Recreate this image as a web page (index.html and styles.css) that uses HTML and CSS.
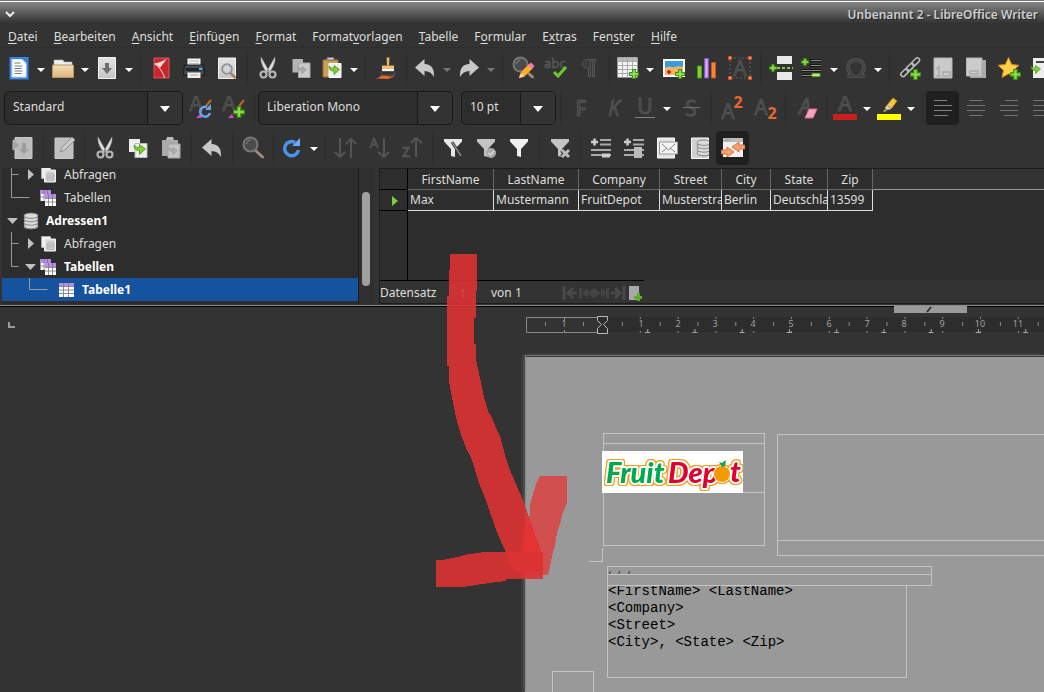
FILE: index.html
```
<!DOCTYPE html>
<html lang="de">
<head>
    <meta charset="UTF-8">
    <meta name="viewport" content="width=device-width, initial-scale=1.0">
    <title>Unbenannt 2 - LibreOffice Writer</title>
    <link rel="stylesheet" href="styles.css">
</head>
<body>
    <!-- shared icon parts -->
    <svg class="defs" width="0" height="0" aria-hidden="true">
        <defs>
            <linearGradient id="paper" x1="0" y1="0" x2="0" y2="1"><stop offset="0" stop-color="#e4e4e4"/><stop offset="1" stop-color="#c4c4c4"/></linearGradient>
            <linearGradient id="folder" x1="0" y1="0" x2="0" y2="1"><stop offset="0" stop-color="#f2dcb8"/><stop offset="1" stop-color="#dcb67c"/></linearGradient>
            <linearGradient id="purple" x1="0" y1="0" x2="1" y2="0"><stop offset="0" stop-color="#a56de2"/><stop offset=".5" stop-color="#d6b8f5"/><stop offset="1" stop-color="#a56de2"/></linearGradient>
        </defs>
        <symbol id="plus" viewBox="0 0 10 10"><path d="M3.500 .5h3v3h3v3h-3v3h-3v-3h-3v-3h3z" fill="#8be04a" stroke="#3f8a12"/></symbol>
        <symbol id="cut" viewBox="0 0 24 24">
            <path d="M5 1l8 14-2 1.500C7 12 4.500 6 5 1zM19 1l-8 14 2 1.500C17 12 19.500 6 19 1z" fill="#dcdcdc" stroke="#999" stroke-width=".5"/>
            <circle cx="7.500" cy="18.500" r="3" fill="none" stroke="#b4b4b4" stroke-width="2.200"/><circle cx="16.500" cy="18.500" r="3" fill="none" stroke="#b4b4b4" stroke-width="2.200"/>
        </symbol>
        <symbol id="swoop" viewBox="0 0 12 10"><path d="M1 1c0 4 2 5 5 5V9.500l5.500-5L6 .5V3C4 3.500 2.500 3 1 1z" stroke-width=".7"/></symbol>
        <symbol id="undo" viewBox="0 0 24 24"><path d="M2 11.500l9.500-8.500v5c7 0 10 5 9.500 13-2-4-5-6-9.500-6v5z" fill="#c8c8c8"/></symbol>
        <symbol id="lens" viewBox="0 0 24 24"><path d="M15 15l6.500 6" stroke="#a08a78" stroke-width="3" stroke-linecap="round"/><circle cx="9.500" cy="8.500" r="7" fill="#4b4b4e" stroke="#77777a" stroke-width="2"/><path d="M5.500 8c0-2 2-4 4-4" fill="none" stroke="#8a8a8c"/></symbol>
        <symbol id="funnel" viewBox="0 0 24 24"><path d="M3 3h18v2.500L14 13v8l-4-1v-7L3 5.500z"/></symbol>
        <symbol id="db" viewBox="0 0 18 18"><path d="M2 4v11c0 3 14 3 14 0V4z" fill="#aaa"/><g fill="#dadada" stroke="#777" stroke-width=".8"><ellipse cx="9" cy="14" rx="7" ry="2.700"/><ellipse cx="9" cy="10.500" rx="7" ry="2.700"/><ellipse cx="9" cy="7" rx="7" ry="2.700"/><ellipse cx="9" cy="3.700" rx="7" ry="2.700"/></g></symbol>
        <symbol id="queries" viewBox="0 0 18 18"><path d="M1.500 1.500h9v11h-9z" fill="#eee" stroke="#aaa"/><path d="M4.500 4h11v12h-11z" fill="#ddd" stroke="#f2f2f2"/><path d="M7 8.500c0-2 7-2 7 0v6H7zM7 10h7M7 12h7" fill="#ccc" stroke="#a4a4a4" stroke-width=".6"/></symbol>
        <symbol id="tables" viewBox="0 0 18 18">
            <path d="M.5 1h10v11H.5z" fill="#fff"/><path d="M.5 1h10v4H.5z" fill="#b98af0"/><path d="M4 1v11M7.500 1v11M.5 8h10" stroke="#777" fill="none" stroke-width=".8"/>
            <path d="M5 5h11v12H5z" fill="#fff"/><path d="M5 5h11v4H5z" fill="#b98af0"/><path d="M5 13h11M8.500 5v12M12.500 5v12M5 9.500h11" stroke="#777" fill="none" stroke-width=".8"/>
        </symbol>
        <symbol id="table" viewBox="0 0 18 18"><path d="M1 2h15v14H1z" fill="#fff"/><path d="M1 2h15v4H1z" fill="#b98af0"/><path d="M1 5.500h15M1 9h15M1 12.500h15M5.500 2v14M10.500 2v14" stroke="#888" fill="none"/></symbol>
    </svg>

    <header class="titlebar">
        <button class="window-menu" aria-label="Fenstermenü"><svg width="10" height="8"><path d="M1 1l4 4 4-4" fill="none" stroke="#eee" stroke-width="2"/></svg></button>
        <h1 class="title">Unbenannt 2 - LibreOffice Writer</h1>
    </header>

    <nav class="menubar">
        <button><u>D</u>atei</button>
        <button><u>B</u>earbeiten</button>
        <button><u>A</u>nsicht</button>
        <button><u>E</u>infügen</button>
        <button><u>F</u>ormat</button>
        <button>Format<u>v</u>orlagen</button>
        <button><u>T</u>abelle</button>
        <button>F<u>o</u>rmular</button>
        <button>E<u>x</u>tras</button>
        <button>Fen<u>s</u>ter</button>
        <button><u>H</u>ilfe</button>
    </nav>

    <div class="toolbar standard">
        <button class="tool split" aria-label="Neu"><svg class="icon" viewBox="0 0 24 24"><path d="M3.500 2h17v20.500h-17z" fill="#dbeafc" stroke="#3584e4" stroke-width="2"/><path d="M6 4h10l2.500 3v13H6z" fill="#fff"/><path d="M14 2h6v6z" fill="#3584e4"/><path d="M7.500 7h6M7.500 10h8M7.500 12.500h7M7.500 15h8M7.500 17.500h7" stroke="#777"/></svg></button><button class="drop" aria-label="Neu, Auswahl"></button>
        <button class="tool split" aria-label="Öffnen"><svg class="icon" viewBox="0 0 24 24"><path d="M3 4h9l1 2h8v6H3z" fill="#eee" stroke="#bbb" stroke-width=".6"/><path d="M1.500 9h21v12.500h-21z" fill="url(#folder)" stroke="#b8935e"/></svg></button><button class="drop" aria-label="Öffnen, Auswahl"></button>
        <button class="tool split" aria-label="Speichern"><svg class="icon" viewBox="0 0 24 24"><path d="M3.500 1.500h17v21h-17z" fill="url(#paper)" stroke="#f4f4f4"/><path d="M10 7h4v5h3l-5 6-5-6h3z" fill="#6c6e72"/></svg></button><button class="drop" aria-label="Speichern, Auswahl"></button>
        <span class="sep"></span>
        <button class="tool" aria-label="Als PDF exportieren"><svg class="icon" viewBox="0 0 24 24"><path d="M5 2h15v20H5z" fill="#c9252b" stroke="#e8686c" stroke-width=".8"/><path d="M5.500 7.500c6-1 10-3 13-5.500-5 5-6 14-2 20-2-6-6-12-11-14.500z" fill="#fff" opacity=".85"/><path d="M7 18c3-5 6-9 10-14 0 0-4 7-1 16-2-4-5-5-9-2z" fill="#c9252b"/><path d="M5.500 8c4 2 8 7 10 14" fill="none" stroke="#f6dcdc"/></svg></button>
        <button class="tool" aria-label="Drucken"><svg class="icon" viewBox="0 0 24 24"><path d="M5.500 2.500h13v7h-13z" fill="#f4f4f4"/><path d="M7 5h10M7 7.500h10" stroke="#bbb"/><path d="M2.500 9h19l1 10h-21z" fill="#484c50" stroke="#14171a"/><path d="M4 12h16v3H4z" fill="#202326"/><path d="M5.500 16.500h13v5.500h-13z" fill="#eee"/><path d="M8 19h8" stroke="#aaa"/><path d="M17 12h3v2h-3z" fill="#35c5f4"/></svg></button>
        <button class="tool" aria-label="Druckvorschau"><svg class="icon" viewBox="0 0 24 24"><path d="M3.500 2h17v20.500h-17z" fill="url(#paper)" stroke="#f4f4f4"/><path d="M15.500 17l5 5" stroke="#a8865a" stroke-width="2.500"/><circle cx="12" cy="13" r="5" fill="#c2c6ca" stroke="#8a8e92" stroke-width="1.500"/><circle cx="12" cy="13" r="2" fill="none" stroke="#eee"/></svg></button>
        <span class="sep"></span>
        <button class="tool" aria-label="Ausschneiden"><svg class="icon"><use href="#cut"/></svg></button>
        <button class="tool" aria-label="Kopieren"><svg class="icon" viewBox="0 0 24 24"><path d="M3.500 3h10.500v13.500H3.500z" fill="#b4b4b4"/><path d="M9.500 7h11.500v14.500H9.500z" fill="#cacaca" stroke="#a8a8a8"/><use href="#swoop" x="8" y="10" width="10" height="8" fill="#ababab" stroke="#8c8c8c"/></svg></button>
        <button class="tool split" aria-label="Einfügen"><svg class="icon" viewBox="0 0 24 24"><path d="M3 4h15v17H3z" fill="#cf9f55" stroke="#9b6f2c"/><path d="M6.500 4h8l-1-2.500h-6z" fill="#ccc" stroke="#777"/><path d="M9 7.500h12v14H9z" fill="#eee" stroke="#fff"/><use href="#swoop" x="8" y="9" width="12" height="10" fill="#7ed02f" stroke="#3f8a12"/></svg></button><button class="drop" aria-label="Einfügen, Auswahl"></button>
        <span class="sep"></span>
        <button class="tool" aria-label="Format übertragen"><svg class="icon" viewBox="0 0 24 24"><path d="M12.500 1.500h3l-.5 8h-2z" fill="#e8b860"/><path d="M8 9.500h12v4H8z" fill="#e9bd72"/><path d="M8 13h12v3H8z" fill="#f4f4f4"/><path d="M8 15.500h12l1 3.500H7z" fill="#333" stroke="#555"/><path d="M1 22.500c5 0 4-3 9-3s5 2 10 0c0 2-4 2-5 3.500z" fill="#e9692c"/></svg></button>
        <span class="sep"></span>
        <button class="tool split" aria-label="Rückgängig"><svg class="icon"><use href="#undo"/></svg></button><button class="drop dim" aria-label="Rückgängig, Auswahl"></button>
        <button class="tool split" aria-label="Wiederherstellen"><svg class="icon flip"><use href="#undo"/></svg></button><button class="drop dim" aria-label="Wiederherstellen, Auswahl"></button>
        <span class="sep"></span>
        <button class="tool" aria-label="Suchen und Ersetzen"><svg class="icon" viewBox="0 0 24 24"><use href="#lens"/><path d="M8 22l2-6 8-8 4 4-8 8z" fill="#f5b22e" stroke="#a86d10" stroke-width=".7"/><path d="M17 9l3-2.500 3.500 3.500L21 13z" fill="#f07ab0"/><path d="M8 22l2-5 3.500 3.500z" fill="#eed8b0"/></svg></button>
        <button class="tool" aria-label="Rechtschreibung"><svg class="icon" viewBox="0 0 24 24"><text x="0" y="12" class="glyph abc">abc</text><path d="M10 16l4 4 8-9" fill="none" stroke="#6cc72c" stroke-width="3"/></svg></button>
        <button class="tool" aria-label="Formatierungszeichen"><svg class="icon" viewBox="0 0 24 24"><path d="M19 3.500h-9c-6 0-6 8.500 0 8.500h1.500v9h2V5h2v16h2V5H19z" fill="#3c3c3c" stroke="#5c5c5c" stroke-width=".8"/></svg></button>
        <span class="sep"></span>
        <button class="tool split" aria-label="Tabelle einfügen"><svg class="icon" viewBox="0 0 24 24"><path d="M1.500 1.500h20v20h-20z" fill="#f4f4f4"/><path d="M1.500 1.500h20v4h-20z" fill="#bbb"/><path d="M1.500 5.500h20M1.500 9.500h20M1.500 13.500h20M1.500 17.500h20M6.500 1.500v20M11.500 1.500v20M16.500 1.500v20" stroke="#aaa"/><use href="#plus" x="13" y="13" width="10" height="10"/></svg></button><button class="drop" aria-label="Tabelle, Auswahl"></button>
        <button class="tool" aria-label="Bild einfügen"><svg class="icon" viewBox="0 0 24 24"><path d="M1 3h22v18H1z" fill="#fff"/><path d="M3 5h18v7H3z" fill="#3b9bdc"/><path d="M3 12c5-3 7 0 10-1s5-1 8 0v8H3z" fill="#f4b563"/><path d="M7 14v4M5 16h4" stroke="#d02818" stroke-width="2"/><use href="#plus" x="13" y="13" width="10" height="10"/></svg></button>
        <button class="tool" aria-label="Diagramm einfügen"><svg class="icon" viewBox="0 0 24 24"><path d="M2.500 10h4v12h-4z" fill="#7ed02f" stroke="#4a9a18"/><path d="M9.500 2.500h4v19.500h-4z" fill="url(#purple)" stroke="#8a4fd0"/><path d="M16.500 6.500h4v15.500h-4z" fill="#f08838" stroke="#c85a14"/></svg></button>
        <button class="tool" aria-label="Textfeld einfügen"><svg class="icon" viewBox="0 0 24 24"><path d="M2 2h20v20H2z" fill="none" stroke="#606060" stroke-dasharray="2 2"/><text x="12" y="20" text-anchor="middle" class="glyph">A</text><path d="M.5 .5h3v3h-3zM20.500 .5h3v3h-3zM.5 20.500h3v3h-3zM20.500 20.500h3v3h-3z" fill="#f49a70" stroke="#d84a1c"/></svg></button>
        <span class="sep"></span>
        <button class="tool" aria-label="Seitenumbruch"><svg class="icon" viewBox="0 0 24 24"><path d="M8 0h15v8H8zM8 16h15v8H8z" fill="#e8e8e8"/><path d="M8 12h16" stroke="#7ed02f" stroke-width="2" stroke-dasharray="3 2"/><use href="#plus" x="0" y="8" width="8" height="8"/></svg></button>
        <button class="tool split" aria-label="Feldbefehl"><svg class="icon" viewBox="0 0 24 24"><path d="M10 4.500h11M10 9.500h11M2 14.500h19M2 19.500h10" stroke="#161616" stroke-width="3"/><path d="M11 4.500h10M11 9.500h10M2 14.500h19M2 19.500h10" stroke="#8a8a8a"/><use href="#plus" x="1" y="2" width="8" height="8"/><path d="M12 17.500h8v3h-8z" fill="#b8ec80" stroke="#5aaa22"/></svg></button><button class="drop" aria-label="Feldbefehl, Auswahl"></button>
        <button class="tool split" aria-label="Sonderzeichen"><svg class="icon" viewBox="0 0 24 24"><path d="M3 20h6c-8-6-6-16 3-16s11 10 3 16h6" fill="none" stroke="#5a5a5a" stroke-width="3.500"/><path d="M3 20h6c-8-6-6-16 3-16s11 10 3 16h6" fill="none" stroke="#404040" stroke-width="2"/></svg></button><button class="drop" aria-label="Sonderzeichen, Auswahl"></button>
        <span class="sep"></span>
        <button class="tool" aria-label="Hyperlink"><svg class="icon" viewBox="0 0 24 24"><g fill="none" stroke="#bebebe" stroke-width="1.500"><rect x="15.500" y="1" width="4.500" height="9" rx="2.200" transform="rotate(45 17.500 5.500)"/><rect x="10" y="6.500" width="4.500" height="9" rx="2.200" transform="rotate(45 12 11)"/><rect x="4.500" y="12" width="4.500" height="9" rx="2.200" transform="rotate(45 6.500 16.500)"/></g><use href="#plus" x="12" y="13" width="11" height="11"/></svg></button>
        <button class="tool" aria-label="Fußnote"><svg class="icon" viewBox="0 0 24 24"><path d="M3 2h18v20H3z" fill="#cacaca" stroke="#b4b4b4"/><path d="M5 13l3-2v9M5 20h5M12 16h7v4h-7z" fill="none" stroke="#aaa" stroke-width="1.500"/></svg></button>
        <button class="tool" aria-label="Endnote"><svg class="icon" viewBox="0 0 24 24"><path d="M6 4h16v18H6z" fill="#aaa"/><path d="M2.500 2h15.500v18H2.500z" fill="#ccc" stroke="#b4b4b4"/><path d="M6 15h8v3H6zM18 12v7M18 8v2" fill="none" stroke="#aaa" stroke-width="1.500"/></svg></button>
        <button class="tool" aria-label="Lesezeichen"><svg class="icon" viewBox="0 0 24 24"><path d="M11.500 1.500l3.200 7 7.300.8-5.500 5 1.600 7.200-6.600-3.700L5 21.500l1.500-7.200-5.500-5 7.300-.8z" fill="#fbd04c" stroke="#d28a12"/><use href="#plus" x="13" y="13" width="11" height="11"/></svg></button>
        <button class="tool" aria-label="Querverweis"><svg class="icon" viewBox="0 0 24 24"><path d="M3 2h18v20H3z" fill="#eee"/><path d="M6 6h14" stroke="#444" stroke-width="2"/><use href="#swoop" x="0" y="9" width="11" height="9" fill="#7ed02f" stroke="#3f8a12"/></svg></button>
    </div>

    <div class="toolbar formatting">
        <span class="combo style-name"><select aria-label="Absatzvorlage"><option>Standard</option></select></span>
        <button class="tool" aria-label="Vorlage aktualisieren"><svg class="icon" viewBox="0 0 24 24"><text x="7" y="15" text-anchor="middle" class="glyph">A</text><path d="M17 10l5-6" stroke="#c06820" stroke-width="2"/><path d="M7 22l4-4 2 4z" fill="#d04ac8"/><path d="M18 11a5 5 0 1 0 3 6" fill="none" stroke="#6aa6ee" stroke-width="2.500"/><path d="M16 14h6V8z" fill="#6aa6ee"/></svg></button>
        <button class="tool" aria-label="Neue Vorlage"><svg class="icon" viewBox="0 0 24 24"><text x="7" y="15" text-anchor="middle" class="glyph">A</text><path d="M17 10l5-6" stroke="#c06820" stroke-width="2"/><path d="M6 22l4-4 2 4z" fill="#d04ac8"/><use href="#plus" x="11" y="10" width="12" height="12"/></svg></button>
        <span class="sep"></span>
        <span class="combo font-name"><select aria-label="Schriftname"><option>Liberation Mono</option></select></span>
        <span class="combo font-size"><select aria-label="Schriftgröße"><option>10 pt</option></select></span>
        <span class="sep"></span>
        <button class="tool" aria-label="Fett"><svg class="icon" viewBox="0 0 24 24"><text x="12" y="20" text-anchor="middle" class="glyph bold">F</text></svg></button>
        <button class="tool" aria-label="Kursiv"><svg class="icon" viewBox="0 0 24 24"><text x="12" y="20" text-anchor="middle" class="glyph italic">K</text></svg></button>
        <button class="tool split" aria-label="Unterstrichen"><svg class="icon" viewBox="0 0 24 24"><text x="12" y="18" text-anchor="middle" class="glyph">U</text><path d="M2 21.500h20" stroke="#808080"/></svg></button><button class="drop" aria-label="Unterstrichen, Auswahl"></button>
        <button class="tool" aria-label="Durchgestrichen"><svg class="icon" viewBox="0 0 24 24"><text x="12" y="20" text-anchor="middle" class="glyph">S</text><path d="M4 11.500h17" stroke="#707070"/></svg></button>
        <span class="sep"></span>
        <button class="tool" aria-label="Hochgestellt"><svg class="icon" viewBox="0 0 24 24"><text x="8" y="23" text-anchor="middle" class="glyph">A</text><text x="18" y="12" text-anchor="middle" class="digit">2</text></svg></button>
        <button class="tool" aria-label="Tiefgestellt"><svg class="icon" viewBox="0 0 24 24"><text x="8" y="19" text-anchor="middle" class="glyph">A</text><text x="19" y="23" text-anchor="middle" class="digit">2</text></svg></button>
        <span class="sep"></span>
        <button class="tool" aria-label="Formatierung löschen"><svg class="icon" viewBox="0 0 24 24"><text x="11" y="18" text-anchor="middle" class="glyph italic">A</text><path d="M15 13h8l-4 9h-8z" fill="#f6a3bd" stroke="#e8608a"/></svg></button>
        <span class="sep"></span>
        <button class="tool split" aria-label="Schriftfarbe"><svg class="icon" viewBox="0 0 24 24"><text x="12" y="15" text-anchor="middle" class="glyph">A</text><path d="M0 18h24v6H0z" fill="#c9211e"/></svg></button><button class="drop" aria-label="Schriftfarbe, Auswahl"></button>
        <button class="tool split" aria-label="Hervorheben"><svg class="icon" viewBox="0 0 24 24"><path d="M10 9l6-7 4 3-6 8z" fill="#f6c846" stroke="#b8860b"/><path d="M10 9l4 4-4 1-2-2z" fill="#ddd" stroke="#888"/><path d="M8 13l2 2-4 1z" fill="#e8b030"/><path d="M0 18h24v6H0z" fill="#ffff00"/></svg></button><button class="drop" aria-label="Hervorheben, Auswahl"></button>
        <span class="sep"></span>
        <button class="tool active" aria-label="Linksbündig"><svg class="icon" viewBox="0 0 24 24"><path d="M3 4.500h13M3 9.500h18M3 14.500h18M3 19.500h14" stroke="#808080"/></svg></button>
        <button class="tool" aria-label="Zentriert"><svg class="icon lines" viewBox="0 0 24 24"><path d="M5 4.500h14M3 9.500h18M3 14.500h18M5 19.500h14"/></svg></button>
        <button class="tool" aria-label="Rechtsbündig"><svg class="icon lines" viewBox="0 0 24 24"><path d="M8 4.500h13M3 9.500h18M3 14.500h18M7 19.500h14"/></svg></button>
        <button class="tool" aria-label="Blocksatz"><svg class="icon lines" viewBox="0 0 24 24"><path d="M3 4.500h18M3 9.500h18M3 14.500h18M3 19.500h18"/></svg></button>
    </div>

    <div class="toolbar table-data">
        <button class="tool" aria-label="Datensatz speichern"><svg class="icon" viewBox="0 0 24 24"><path d="M4 1.500h17v21H4z" fill="#bcbcbc" stroke="#c8c8c8"/><path d="M2 4l7 5-7 5z" fill="#a4a4a4" stroke="#bbb"/><path d="M11 7h4v6h3l-5 5-5-5h3z" fill="#9c9c9c"/></svg></button>
        <span class="sep"></span>
        <button class="tool" aria-label="Daten bearbeiten"><svg class="icon" viewBox="0 0 24 24"><path d="M3 2h18v20.500H3z" fill="#c0c0c0" stroke="#c8c8c8"/><path d="M8 16l2-5L20 1l3 3-10 10z" fill="#c8c8c8" stroke="#929292"/></svg></button>
        <span class="sep"></span>
        <button class="tool" aria-label="Ausschneiden"><svg class="icon"><use href="#cut"/></svg></button>
        <button class="tool" aria-label="Kopieren"><svg class="icon" viewBox="0 0 24 24"><path d="M3 3h11v13H3z" fill="#eee"/><path d="M9 7.500h12v14H9z" fill="#eee" stroke="#bbb"/><use href="#swoop" x="7" y="8" width="13" height="11" fill="#7ed02f" stroke="#3f8a12"/></svg></button>
        <button class="tool" aria-label="Einfügen"><svg class="icon" viewBox="0 0 24 24"><path d="M3 4h16v16H3z" fill="#aaa"/><path d="M7 4h8l-1-3H8z" fill="#bbb"/><path d="M9 8h12v14H9z" fill="#c4c4c4" stroke="#a4a4a4"/><use href="#swoop" x="9" y="11" width="10" height="8" fill="#b0b0b0" stroke="#909090"/></svg></button>
        <span class="sep"></span>
        <button class="tool" aria-label="Rückgängig"><svg class="icon"><use href="#undo"/></svg></button>
        <span class="sep"></span>
        <button class="tool" aria-label="Datensatz suchen"><svg class="icon"><use href="#lens"/></svg></button>
        <span class="sep"></span>
        <button class="tool split" aria-label="Aktualisieren"><svg class="icon" viewBox="0 0 24 24"><path d="M15 6.500a7 7 0 1 0 3.500 7.500" fill="none" stroke="#4a94ee" stroke-width="3.500"/><path d="M12 10h8V2z" fill="#6aaaf4"/></svg></button><button class="drop" aria-label="Aktualisieren, Auswahl"></button>
        <span class="sep"></span>
        <button class="tool" aria-label="Sortieren"><svg class="icon" viewBox="0 0 24 24"><path d="M6 2v19M1 16l5 5 5-5M17 22V3M12 8l5-5 5 5" class="line"/></svg></button>
        <button class="tool" aria-label="Aufsteigend"><svg class="icon" viewBox="0 0 24 24"><text x="7" y="12" text-anchor="middle" class="glyph small">A</text><path d="M17 2v19M11 16l6 5 5-5" class="line"/></svg></button>
        <button class="tool" aria-label="Absteigend"><svg class="icon" viewBox="0 0 24 24"><text x="6" y="21" text-anchor="middle" class="glyph small">Z</text><path d="M16 21V2M11 7l5-5 6 5" class="line"/></svg></button>
        <span class="sep"></span>
        <button class="tool" aria-label="AutoFilter"><svg class="icon" viewBox="0 0 24 24"><use href="#funnel" fill="#e8e8e8"/><path d="M11 6l9 14" stroke="#444" stroke-width="3"/><path d="M11 6l9 14" stroke="#aaa"/></svg></button>
        <button class="tool" aria-label="Filter anwenden"><svg class="icon" viewBox="0 0 24 24"><use href="#funnel" fill="#c4c4c4"/><circle cx="17" cy="17" r="5" fill="#aaa"/><path d="M14.500 17l2 2 3.500-4" fill="none" stroke="#ddd" stroke-width="1.500"/></svg></button>
        <button class="tool" aria-label="Standardfilter"><svg class="icon"><use href="#funnel" fill="#f0f0f0"/></svg></button>
        <span class="sep"></span>
        <button class="tool" aria-label="Filter entfernen"><svg class="icon" viewBox="0 0 24 24"><use href="#funnel" fill="#c4c4c4"/><path d="M14 14l7 7M21 14l-7 7" stroke="#333" stroke-width="5"/><path d="M14 14l7 7M21 14l-7 7" stroke="#bbb" stroke-width="3"/></svg></button>
        <span class="sep"></span>
        <button class="tool" aria-label="Daten in Text"><svg class="icon" viewBox="0 0 24 24"><path d="M11 4h11M11 8.500h11M2 14h20M2 19h20" stroke="#aaa" stroke-width="2"/><path d="M5.500 2.500v7M2 6h7" stroke="#ccc" stroke-width="2.500"/><path d="M13 17.500h8v4h-8z" fill="#ccc"/></svg></button>
        <button class="tool" aria-label="Daten in Felder"><svg class="icon" viewBox="0 0 24 24"><path d="M11 4h11M11 8.500h11M2 14h20M2 19h20" stroke="#aaa" stroke-width="2"/><path d="M5.500 2.500v7M2 6h7" stroke="#ccc" stroke-width="2.500"/><path d="M12 11h8v11h-8z" fill="#bbb"/></svg></button>
        <button class="tool" aria-label="Seriendruck"><svg class="icon" viewBox="0 0 24 24"><path d="M2.500 2h17v20h-17z" fill="#e4e4e4" stroke="#fff"/><path d="M4.500 6h18v12h-18z" fill="#f4f4f4" stroke="#999"/><path d="M7 8l6.500 6L20 8M7 16l5-4M20 16l-5-4" fill="none" stroke="#888"/></svg></button>
        <button class="tool" aria-label="Datenquelle"><svg class="icon" viewBox="0 0 24 24"><path d="M3.500 2h17v20.500h-17z" fill="#d0d0d0" stroke="#fff"/><svg x="7" y="3" width="14" height="19"><use href="#db" width="18" height="18"/></svg></svg></button>
        <button class="tool active" aria-label="Explorer ein/aus"><svg class="icon" viewBox="0 0 24 24"><path d="M2 2h20v19H2z" fill="#f0f0f0"/><path d="M2 2h20v4H2z" fill="#bbb"/><path d="M4 4h6" stroke="#777" stroke-dasharray="1 1"/><path d="M24 9h-6V6l-7 5 7 5v-3h6zM0 14h6v-3l7 5-7 5v-3H0z" fill="#f6a070" stroke="#d2602a" stroke-width=".8"/></svg></button>
    </div>

    <section class="sources">
        <div class="explorer">
            <ul class="tree">
                <li class="row"><svg class="guide level1"><path d="M9.500 0v23M9.500 11.500h7"/><path class="closed" d="M26 6v11l6-5.500z"/></svg><svg class="node"><use href="#queries"/></svg>Abfragen</li>
                <li class="row"><svg class="guide level1"><path d="M9.500 0v11.500h18"/></svg><svg class="node"><use href="#tables"/></svg>Tabellen</li>
                <li class="row bold"><svg class="guide"><path class="open" d="M5 9h11l-5.500 6z"/></svg><svg class="node"><use href="#db"/></svg>Adressen1</li>
                <li class="row"><svg class="guide level1"><path d="M9.500 0v23M9.500 11.500h7"/><path class="closed" d="M26 6v11l6-5.500z"/></svg><svg class="node"><use href="#queries"/></svg>Abfragen</li>
                <li class="row bold"><svg class="guide level1"><path d="M9.500 0v11.500h7"/><path class="open" d="M23 9h11l-5.500 6z"/></svg><svg class="node"><use href="#tables"/></svg>Tabellen</li>
                <li class="row bold selected"><svg class="guide level2"><path d="M27.500 0v11.500h18"/></svg><svg class="node"><use href="#table"/></svg>Tabelle1</li>
            </ul>
            <div class="scrollbar"><div class="thumb"></div></div>
        </div>
        <div class="browser">
            <div class="grid">
                <table>
                    <colgroup><col class="c-handle"><col class="c-first"><col class="c-last"><col class="c-company"><col class="c-street"><col class="c-city"><col class="c-state"><col class="c-zip"><col></colgroup>
                    <thead>
                        <tr><th class="handle"></th><th>FirstName</th><th>LastName</th><th>Company</th><th>Street</th><th>City</th><th>State</th><th>Zip</th><th class="filler"></th></tr>
                    </thead>
                    <tbody>
                        <tr><td class="handle"><svg width="8" height="10"><path d="M1 0v10l6-5z" fill="#7ccf35"/></svg></td><td>Max</td><td>Mustermann</td><td>FruitDepot</td><td>Musterstraße</td><td>Berlin</td><td>Deutschland</td><td>13599</td><td class="filler"></td></tr>
                    </tbody>
                </table>
                <div class="handle-strip"></div>
            </div>
            <div class="records">
                <label for="record">Datensatz</label>
                <input type="text" id="record" value="1">
                <span class="count">von 1</span>
                <button aria-label="Erster Datensatz"><svg width="16" height="16"><path d="M2 1v14M15 8H6M11 3L6 8l5 5"/></svg></button>
                <button aria-label="Vorheriger Datensatz"><svg width="16" height="16"><path class="solid" d="M1 3h3v10H1zM10 3v10L3 8zM16 3v10L9 8z"/></svg></button>
                <button aria-label="Nächster Datensatz"><svg width="16" height="16"><path class="solid" d="M15 3h-3v10h3zM7 3v10l6-5zM0 3v10l7-5z"/></svg></button>
                <button aria-label="Letzter Datensatz"><svg width="16" height="16"><path d="M14 1v14M1 8h9M5 3l5 5-5 5"/></svg></button>
                <button aria-label="Neuer Datensatz"><svg width="16" height="16"><rect x="3" y="1" width="10" height="14" fill="#a8a8a8"/><svg x="8" y="8" width="8" height="8" viewBox="0 0 8 8"><rect x="3" width="3" height="8" fill="#5cab2c"/><rect y="3" width="8" height="3" fill="#5cab2c"/></svg></svg></button>
            </div>
        </div>
    </section>

    <main class="workspace">
        <div class="splitter"><svg width="73" height="7"><path d="M33 6l4-5" stroke="#222" stroke-width="1.500"/></svg></div>
        <div class="ruler-row">
            <svg class="tab-mark" width="8" height="6"><path d="M1 0v5h6" fill="none" stroke="#999" stroke-width="2"/></svg>
            <svg class="ruler" width="100%" height="18">
                <defs>
                    <pattern id="ticks" x="77" y="0" width="37.800" height="18" patternUnits="userSpaceOnUse"><path d="M19.400 6v4M37.300 1v2M37.300 15v2" stroke="#8a8a8a"/></pattern>
                    <pattern id="tabs" x="77" y="0" width="47.250" height="18" patternUnits="userSpaceOnUse"><path d="M44.700 13v3M42 16.500h5" stroke="#aaa" fill="none"/></pattern>
                </defs>
                <rect x="77" y="1" width="100%" height="15" fill="#2d2d2d"/>
                <rect x="77" y="0" width="100%" height="18" fill="url(#ticks)"/>
                <rect x="77" y="0" width="100%" height="18" fill="url(#tabs)"/>
                <path d="M.5 1.500h76v15H.500zM19.500 6v4M57.500 6v4M38.500 2v2M38.500 14v2" fill="none" stroke="#8a8a8a"/>
                <path d="M71.500 .5h10v4l-4 4 4 4v5h-10v-5l4-4-4-4z" fill="#2d2d2d" stroke="#bbb"/>
                <g class="numbers">
                    <text x="38" y="11">1</text><text x="115" y="11">1</text><text x="152" y="11">2</text><text x="189" y="11">3</text><text x="227" y="11">4</text><text x="265" y="11">5</text><text x="303" y="11">6</text><text x="341" y="11">7</text><text x="378" y="11">8</text><text x="416" y="11">9</text><text x="454" y="11">10</text><text x="492" y="11">11</text>
                </g>
            </svg>
        </div>
        <div class="paper">
            <div class="frame logo-frame">
                <div class="frame-head"></div>
                <div class="frame-line"></div>
            </div>
            <svg class="logo" viewBox="0 0 141 42" width="141" height="42">
                <rect width="141" height="42" fill="#fff"/>
                <g class="wordmark">
                    <text x="4" y="32">Fruit</text>
                    <text x="66" y="32" class="red">Dep</text>
                    <text x="128" y="31" class="red">t</text>
                    <circle cx="120" cy="23" r="8" fill="#f29a00" stroke-width="2"/>
                </g>
                <path d="M120 16l-3-5 3 1 4-3-1 6z" fill="#00a94f"/>
            </svg>
            <div class="frame side-frame"><div class="side-body"></div></div>
            <div class="corner"></div>
            <div class="frame sender-frame"><span class="sender">, , ,</span></div>
            <div class="frame address-frame">&lt;FirstName&gt; &lt;LastName&gt;<br>&lt;Company&gt;<br>&lt;Street&gt;<br>&lt;City&gt;, &lt;State&gt; &lt;Zip&gt;</div>
            <div class="frame mark-frame"></div>
        </div>
    </main>

    <!-- drag direction marker, lies over the whole window -->
    <svg class="marker" width="140" height="340" viewBox="432 250 140 340" shape-rendering="crispEdges" aria-hidden="true">
        <path class="shaft" d="M450 254H477V291H476V318H474V344H476V360L480 378 484 397 488 411 492 418 496 428 500 436 505 455 510 470 515 482 520 493 525 505 528 515 533 528 536 537 539 545 541 552V571H515L511 566 506 552 502 544 497 532 492 518 487 503 483 493 478 480 472 460 466 448 460 432 456 417 452 398 449 381V366H447V296H449V270H450z"/>
        <path class="barb" d="M540 476H567V503L563 512 561 520 557 533 555 545 552 556 550 567 548 575H521V550L525 530 530 515V505L533 494 536 484z"/>
        <path class="shaft" d="M436 560H442L463 556V555L484 552H543V579H506V581L489 583 463 587H436z"/>
    </svg>
</body>
</html>
```
FILE: styles.css
```
* {
    box-sizing: border-box;
}
body {
    margin: 0;
    height: 100vh;
    display: flex;
    flex-direction: column;
    overflow: hidden;
    position: relative;
    background: #333;
    color: #dededc;
    font-family: "Noto Sans", sans-serif;
    font-size: 12px;
    line-height: 16px;
}
button, input, select {
    font: inherit;
    color: inherit;
    background: none;
    border: none;
    margin: 0;
    padding: 0;
}
.defs {
    position: absolute;
}

/* title and menu */
.titlebar {
    height: 25px;
    flex: none;
    display: flex;
    align-items: center;
    justify-content: space-between;
    padding: 4px 6px 0 5px;
    border-top: 1px solid #777;
    background: linear-gradient(#fff 0, #fff 1px, #858585 1px, #333 22px);
}
.window-menu {
    display: flex;
}
.title {
    margin: 0;
    font-size: 12px;
    font-weight: 600;
    color: #ccc;
    text-shadow: 1px 1px 0 #222, -1px -1px 0 #666;
}
.menubar {
    height: 23px;
    flex: none;
    display: flex;
    align-items: center;
    padding-top: 2px;
    border-bottom: 1px solid #2e2e2e;
}
.menubar button {
    padding: 0 8px;
}
.menubar u {
    text-underline-offset: 2px;
}

/* toolbars */
.toolbar {
    flex: none;
    display: flex;
    align-items: center;
    overflow: hidden;
    height: 40px;
    padding-left: 4px;
}
.toolbar > * {
    flex: none;
}
.tool {
    width: 33px;
    height: 34px;
    display: flex;
    align-items: center;
    justify-content: center;
    border-radius: 4px;
}
.tool.split {
    width: 30px;
}
.tool.active {
    background: #1f1f1f;
}
.icon {
    width: 24px;
    height: 24px;
}
.icon.flip {
    transform: scaleX(-1);
}
.drop {
    width: 14px;
    height: 34px;
    display: flex;
    align-items: center;
    justify-content: center;
}
.drop::before {
    content: "";
    border: 4px solid transparent;
    border-top-color: #fff;
    border-bottom: none;
    margin-top: 3px;
}
.drop.dim::before {
    border-top-color: #777;
}
.sep {
    width: 8px;
    height: 32px;
    background: linear-gradient(#2c2c2c, #2c2c2c) center / 1px 100% no-repeat;
}
.formatting {
    height: 39px;
}
.table-data {
    height: 41px;
    padding-left: 6px;
}
.glyph {
    font-size: 21px;
    fill: #474747;
    stroke: #606060;
    stroke-width: .5px;
}
.glyph.abc {
    font-size: 13px;
}
.glyph.small {
    font-size: 14px;
}
.glyph.bold {
    font-weight: 600;
}
.glyph.italic {
    font-style: italic;
}
.digit {
    font-size: 16px;
    font-weight: bold;
    fill: #e8682c;
}
.line {
    fill: none;
    stroke: #545454;
    stroke-width: 2px;
}
.lines {
    stroke: #747474;
}
.combo {
    position: relative;
    height: 34px;
    border: 1px solid #191919;
    border-radius: 5px;
    background: #2d2d2d;
    overflow: hidden;
}
.combo select {
    appearance: none;
    display: block;
    width: 100%;
    height: 31px;
    padding: 0 40px 0 8px;
}
.combo::before {
    content: "";
    position: absolute;
    right: 0;
    top: 0;
    width: 34px;
    height: 32px;
    border-left: 1px solid #191919;
    background: #333;
    pointer-events: none;
}
.combo::after {
    content: "";
    position: absolute;
    right: 12px;
    top: 14px;
    border: 5px solid transparent;
    border-top: 6px solid #fff;
    border-bottom: none;
    pointer-events: none;
}
.style-name {
    width: 179px;
    margin-right: 1px;
}
.font-name {
    width: 195px;
    margin-right: 8px;
}
.font-size {
    width: 95px;
}

/* data sources */
.sources {
    flex: none;
    height: 136px;
    display: flex;
}
.explorer {
    width: 379px;
    flex: none;
    display: flex;
    padding-left: 2px;
}
.tree {
    flex: none;
    width: 356px;
    margin: 0;
    padding: 0;
    list-style: none;
    overflow: hidden;
    display: flex;
    flex-direction: column;
    background: #2d2d2d;
}
.row {
    height: 23px;
    flex: none;
    display: flex;
    align-items: center;
}
.row:first-child {
    margin-top: -5px;
}
.row.bold {
    font-weight: bold;
    color: #fff;
}
.row.selected {
    background: #15539e;
}
.guide {
    width: 20px;
    height: 23px;
    fill: none;
    stroke: #999;
}
.guide.level1 {
    width: 38px;
}
.guide.level2 {
    width: 56px;
}
.guide .open, .guide .closed {
    fill: #c0c0c0;
    stroke: none;
}
.node {
    width: 18px;
    height: 18px;
    margin-right: 6px;
}
.scrollbar {
    width: 16px;
    border-left: 1px solid #1c1c1c;
    background: #303030;
    padding: 24px 3px 18px;
    display: flex;
}
.thumb {
    width: 8px;
    border-radius: 4px;
    background: #a0a0a0;
}
.browser {
    flex: 1;
    min-width: 0;
    display: flex;
    flex-direction: column;
    border: 1px solid #1c1c1c;
    border-right: none;
}
.grid {
    flex: 1;
    display: flex;
    flex-direction: column;
    background: #2d2d2d;
}
.grid table {
    width: 100%;
    table-layout: fixed;
    border-collapse: separate;
    border-spacing: 0;
}
.grid th, .grid td {
    height: 21px;
    padding: 0 2px;
    overflow: hidden;
    white-space: nowrap;
    font-weight: normal;
    text-align: left;
    border-right: 1px solid #ddd;
    border-bottom: 1px solid #ddd;
}
.grid th {
    padding-top: 2px;
    text-align: center;
    border-color: #666;
}
.grid .handle {
    border-color: #000;
    text-align: right;
    padding-right: 8px;
}
.grid .handle svg {
    vertical-align: middle;
}
.grid th.filler {
    background: #333;
    border-right: none;
    border-bottom-color: #999;
}
.grid td.filler {
    border: none;
}
.c-handle { width: 28px; }
.c-first { width: 86px; }
.c-last { width: 85px; }
.c-company { width: 81px; }
.c-street { width: 62px; }
.c-city { width: 49px; }
.c-state { width: 57px; }
.c-zip { width: 45px; }
.handle-strip {
    flex: 1;
    width: 28px;
    border-right: 1px solid #000;
}
.records {
    height: 23px;
    width: 264px;
    flex: none;
    display: flex;
    align-items: center;
    padding-top: 2px;
    border-top: 1px solid #000;
}
.records label {
    width: 58px;
}
.records input {
    width: 49px;
    height: 20px;
    text-align: center;
    border: 1px solid #303030;
    border-width: 0 1px;
}
.records .count {
    width: 75px;
    padding-left: 4px;
}
.records button {
    display: flex;
}
.records path {
    fill: none;
    stroke: #494949;
    stroke-width: 3px;
}
.records .solid {
    fill: #444;
    stroke: none;
}

/* document */
.workspace {
    flex: 1;
    min-height: 0;
    display: flex;
    flex-direction: column;
    margin-top: 1px;
    border-top: 1px solid #8a8a8a;
    box-shadow: inset 0 1px 0 #000;
}
.splitter {
    height: 7px;
    flex: none;
    display: flex;
    justify-content: flex-end;
    padding-right: 77px;
}
.splitter svg {
    background: #999;
}
.ruler-row {
    flex: none;
    height: 42px;
    display: flex;
    padding: 3px 0 0 8px;
}
.tab-mark {
    flex: none;
    margin: 6px 510px 0 0;
}
.ruler {
    flex: 1;
    min-width: 0;
}
.numbers {
    font-size: 9px;
    fill: #a0a0a0;
    text-anchor: middle;
}
.paper {
    flex: 1;
    margin-left: 525px;
    position: relative;
    overflow: hidden;
    background: #999;
    border-top: 1px solid #777;
    border-left: 1px solid #888;
    box-shadow: -2px 0 3px #555, inset 0 1px 0 #333;
    color: #000;
}
/* text frames of the letter, placed freely on the sheet */
.frame {
    position: absolute;
    border: 1px solid #c4c4c4;
}
.logo-frame {
    left: 77px;
    top: 77px;
    width: 162px;
    height: 113px;
}
.frame-head {
    height: 10px;
    border-bottom: 1px solid #c4c4c4;
}
.frame-line {
    height: 49px;
    border-bottom: 1px solid #c4c4c4;
}
.logo {
    position: absolute;
    left: 76px;
    top: 95px;
}
.wordmark {
    font-family: Lato, sans-serif;
    font-weight: 900;
    font-style: italic;
    font-size: 29px;
    fill: #00a94f;
    stroke: #fff;
    stroke-width: 4px;
    stroke-linejoin: round;
    paint-order: stroke;
    filter: drop-shadow(1px 0 0 #f0a020) drop-shadow(-1px 0 0 #f0a020) drop-shadow(0 1px 0 #f0a020) drop-shadow(0 -1px 0 #f0a020);
}
.wordmark .red {
    fill: #e00030;
}
.side-frame {
    left: 251px;
    top: 78px;
    right: -60px;
    height: 122px;
}
.side-body {
    height: 106px;
    border-bottom: 1px solid #c4c4c4;
}
.corner {
    position: absolute;
    left: 63px;
    top: 192px;
    width: 14px;
    height: 14px;
    border: solid #c4c4c4;
    border-width: 0 1px 1px 0;
}
.sender-frame {
    left: 81px;
    top: 210px;
    width: 325px;
    height: 20px;
    z-index: 1;
    background: #999;
}
.sender {
    display: block;
    height: 8px;
    border-bottom: 1px solid #c4c4c4;
    overflow: hidden;
    font-family: "Liberation Mono", monospace;
    font-size: 8px;
    line-height: 8px;
}
.address-frame {
    left: 81px;
    top: 225px;
    width: 300px;
    height: 97px;
    padding-top: 1px;
    font-family: "Liberation Mono", monospace;
    font-size: 14px;
    line-height: 17px;
    white-space: nowrap;
}
.mark-frame {
    left: 26px;
    top: 315px;
    width: 42px;
    height: 60px;
}
.marker {
    position: absolute;
    left: 432px;
    top: 250px;
    pointer-events: none;
    z-index: 5;
}
.shaft {
    fill: #dd3232;
    fill-opacity: .9;
}
.barb {
    fill: #e83232;
    fill-opacity: .72;
}
```
